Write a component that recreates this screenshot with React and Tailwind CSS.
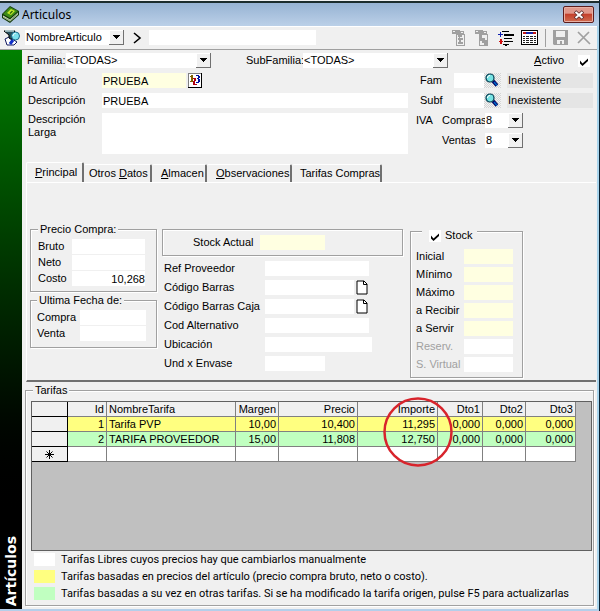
import React from "react";

const box = "rounded-none border-0 p-0 outline-none";
const group =
  "border border-[#a0a0a0] shadow-[1px_1px_0_#fff,inset_1px_1px_0_#fff]";

const TABS = [
  { key: "otros", width: "w-[68px] pl-[5px]", label: <>Otros <u>D</u>atos</> },
  { key: "almacen", width: "w-[55px] pl-[9px]", label: <><u>A</u>lmacen</> },
  { key: "observaciones", width: "w-[85px] pl-[9px]", label: <><u>O</u>bservaciones</> },
  { key: "compras", width: "w-[90px] pl-2", label: <>Tarifas Compras</> },
];

const TARIFAS = [
  { id: 1, nombre: "Tarifa PVP", margen: "10,00", precio: "10,400", importe: "11,295", color: "bg-[#ffff80]" },
  { id: 2, nombre: "TARIFA PROVEEDOR", margen: "15,00", precio: "11,808", importe: "12,750", color: "bg-[#c0ffc0]" },
];

const REFERENCIAS = [
  { id: "ref", label: "Ref Proveedor", width: "w-[104px]" },
  { id: "barras", label: "Código Barras", width: "w-[89px]", doc: true },
  { id: "caja", label: "Código Barras Caja", width: "w-[89px]", doc: true },
  { id: "alt", label: "Cod Alternativo", width: "w-[104px]" },
  { id: "ubi", label: "Ubicación", width: "w-[107px]" },
  { id: "und", label: "Und x Envase", width: "w-[60px]" },
];

const STOCK = [
  { label: "Inicial", bg: "bg-[#ffffe1]" },
  { label: "Mínimo", bg: "bg-[#ffffe1]" },
  { label: "Máximo", bg: "bg-[#ffffe1]" },
  { label: "a Recibir", bg: "bg-[#ffffe1]" },
  { label: "a Servir", bg: "bg-[#ffffe1]" },
  { label: "Reserv.", bg: "bg-white", off: true },
  { label: "S. Virtual", bg: "bg-white", off: true },
];

const LEYENDA = [
  { color: "bg-white", text: "Tarifas Libres cuyos precios hay que cambiarlos manualmente" },
  { color: "bg-[#ffff80]", text: "Tarifas basadas en precios del artículo (precio compra bruto, neto o costo)." },
  { color: "bg-[#c0ffc0]", text: "Tarifas basadas a su vez en otras tarifas. Si se ha modificado la tarifa origen, pulse F5 para actualizarlas" },
];

const Combo = ({ id, label, value, className }) => (
  <div className={`relative h-[15px] shrink-0 ${className}`}>
    <select id={id} aria-label={label} defaultValue={value} className={`${box} block h-full w-full appearance-none bg-white pl-px`}>
      <option>{value}</option>
    </select>
    <span className="pointer-events-none absolute inset-y-0 right-0 flex w-[15px] items-center justify-center border-r border-b border-[#707070] bg-[#f0f0f0] shadow-[inset_1px_1px_0_#fff]">
      <svg width="7" height="4" viewBox="0 0 7 4" shapeRendering="crispEdges"><path d="M0 0h7v1H6v1H5v1H4v1H3V3H2V2H1V1H0z" /></svg>
    </span>
  </div>
);

const Check = ({ id, label }) => (
  <span className="relative block size-3 shrink-0">
    <input id={id} aria-label={label} type="checkbox" defaultChecked className="block size-3 appearance-none bg-white" />
    <svg className="pointer-events-none absolute inset-0" width="12" height="12" viewBox="0 0 12 12">
      <path d="M2 5.500v3l2.500 2.500L10 6V3.500L4.500 8.500z" />
    </svg>
  </span>
);

const BookIcon = () => (
  <svg width="17" height="17" viewBox="0 0 17 17">
    <path d="M0 8 8 0l9 5v4L8 17l-8-5z" fill="#12380a" />
    <path d="M1 8 8 1l8 4-8 7z" fill="#3c8a18" />
    <path d="m1 9.500 7 4 8-7v2L8 15.500l-7-4z" fill="#e8f0d8" />
    <path d="m1 11 7 3.500 8-7" fill="none" stroke="#3a6a20" strokeWidth=".6" />
    <path d="M5 7 9 3l4 2-4 4z" fill="#c8ec28" />
    <path d="m8 7.500 2.500-2.500" stroke="#2c6a10" strokeWidth="1.500" />
  </svg>
);

const FilterIcon = () => (
  <svg width="18" height="17" viewBox="0 0 18 17">
    <path d="M2 10 6 8l8 5-3 3H4z" fill="#fff" stroke="#101860" />
    <path d="M1 2h11L9 6v5L6 9V6z" fill="#28505c" stroke="#000" />
    <path d="m2 2 9 0" stroke="#b8d8dc" strokeWidth="1.500" />
    <path d="m10 11-3 4" stroke="#1030c8" strokeWidth="3" />
    <circle cx="12.500" cy="7" r="4" fill="#7ce0ec" stroke="#1c6c8c" />
    <path d="M10 7c0-1.500 1-2.500 2.500-2.500" fill="none" stroke="#fff" />
  </svg>
);

const LensIcon = () => (
  <svg width="17" height="15" viewBox="0 0 17 15">
    <defs>
      <pattern id="dither" width="2" height="2" patternUnits="userSpaceOnUse">
        <path d="M0 0h1v1H0zM1 1h1v1H1z" fill="#d4d4d4" shapeRendering="crispEdges" />
      </pattern>
    </defs>
    <rect width="17" height="15" fill="#f4f4f4" />
    <rect width="17" height="15" fill="url(#dither)" />
    <path d="m9 8 4 4.500" stroke="#000060" strokeWidth="3.500" />
    <path d="m10 9 3 3.500" stroke="#0068c8" strokeWidth="1.500" />
    <circle cx="6" cy="5" r="4" fill="#78e4e4" stroke="#003c50" strokeWidth="1.200" />
    <path d="M3.500 5c0-1.500 1-2.500 2.500-2.500" fill="none" stroke="#fff" />
  </svg>
);

const NumberIcon = () => (
  <svg width="14" height="15" viewBox="0 0 14 15" shapeRendering="crispEdges">
    <path d="M0 0h14v15H0z" fill="#000" />
    <path d="M0 0h13v14H0z" fill="#808080" />
    <path d="M1 1h12v13H1z" fill="#fff" />
    <path d="M3 2h2v6H3zM2 3h1v1H2zM2 8h4v1H2z" fill="#806000" />
    <path d="M5 5h3v1H5zM6 6h2v2H6zM5 8h2v3H5zM5 11h4v1H5z" fill="#b00010" />
    <path d="M8 2h3v1H8zM10 3h2v2h-2zM9 5h2v1H9zM10 6h2v3h-2zM8 9h3v1H8z" fill="#0010a0" />
  </svg>
);

const DocIcon = () => (
  <svg width="12" height="15" viewBox="0 0 12 15">
    <path d="M1 1h7l3 3v10H1z" fill="#fff" stroke="#000" />
    <path d="M7.500 1v3.500H11" fill="none" stroke="#000" />
  </svg>
);

const SheetIcon = ({ alt }) => (
  <svg width="14" height="16" viewBox="0 0 14 16" shapeRendering="crispEdges">
    <path d="M0 0h8v1h4v3h1v12H4V4H0z" fill="#a0a0a0" />
    <path d="M1 1h2v1H1zM9 2h2v1H9zM5 5h7v10H5z" fill="#f0f0f0" />
    <path d={alt ? "M5 5h2v3h3v2h2v5H9v-2H7v-2H5z" : "M6 5h4v2H8v1h3v2H9v2h2v2H6v-2h1v-2H6V8h1V7H6z"} fill="#a0a0a0" />
  </svg>
);

const TreeIcon = () => (
  <svg width="16" height="16" viewBox="0 0 16 16" shapeRendering="crispEdges">
    <path d="M4 1h7v1H4zM6 4h10v2H6zM6 8h8v1H6zM6 11h9v1H6zM5 14h6v1H5zM7 15h2v1H7z" fill="#000" />
    <path d="M2 2h1v2h2v1H3v2H2V5H0V4h2z" fill="#1020b0" />
    <path d="M2 9h2v2h1v1H4v2H2v-2H1v-1h1z" fill="#d01010" />
  </svg>
);

const GridIcon = () => (
  <svg width="17" height="15" viewBox="0 0 17 15" shapeRendering="crispEdges">
    <path d="M0 0h17v15H0z" fill="#000" />
    <path d="M1 1h15v13H1z" fill="#fff" />
    <path d="M2 2h3v2H2zM12 2h3v2h-3z" fill="#c01818" />
    <path d="M5 2h7v2H5z" fill="#1828a8" />
    <path d="M2 6h13v1H2zM2 8h13v1H2zM2 10h13v1H2zM2 12h13v1H2z" fill="#202020" />
    <path d="M4 5h1v9H4zM8 5h1v9H8zM12 5h1v9h-1z" fill="#fff" />
  </svg>
);

const ToolButton = ({ label, children }) => (
  <button type="button" aria-label={label} className="flex shrink-0 items-center justify-center">{children}</button>
);

const Toolbar = () => (
  <div className="flex h-6 items-center border-b border-[#a0a0a0] pl-[3px] pr-[6px] shadow-[inset_0_1px_0_#fff]">
    <FilterIcon />
    <Combo id="campo" label="Campo" value="NombreArticulo" className="ml-1 w-[99px]" />
    <button type="button" aria-label="Buscar" className="ml-[9px]">
      <svg width="9" height="12" viewBox="0 0 9 12"><path d="m1 1 6 5-6 5" fill="none" stroke="#000" strokeWidth="1.600" /></svg>
    </button>
    <input aria-label="Filtro" className={`${box} ml-[7px] h-[15px] w-[167px] bg-white`} />
    <div className="ml-auto flex items-center">
      <ToolButton label="Exportar"><SheetIcon /></ToolButton>
      <span className="w-[9px]" />
      <ToolButton label="Copiar"><SheetIcon alt /></ToolButton>
      <span className="w-[9px]" />
      <ToolButton label="Ordenar"><TreeIcon /></ToolButton>
      <span className="w-[7px]" />
      <ToolButton label="Rejilla"><GridIcon /></ToolButton>
      <span className="mx-[7px] h-[18px] w-px bg-[#a0a0a0]" />
      <ToolButton label="Guardar">
        <svg width="15" height="15" viewBox="0 0 15 15"><path d="M0 0h15v15H1L0 14z" fill="#a0a0a0" /><path d="M3 1h9v6H3zM4 10h7v4H9v-3H7v3H4z" fill="#f0f0f0" /></svg>
      </ToolButton>
      <span className="w-[9px]" />
      <ToolButton label="Eliminar">
        <svg width="14" height="14" viewBox="0 0 14 14"><path d="m1 1 12 12M12 1 1 12" stroke="#a0a0a0" strokeWidth="1.700" /></svg>
      </ToolButton>
    </div>
  </div>
);

const Familia = ({ id, label }) => (
  <div className="flex items-center gap-[6px]">
    <label htmlFor={id} className="w-7">{label}</label>
    <div className="flex">
      <input id={id} className={`${box} h-[15px] w-[30px] bg-white`} />
      <button type="button" aria-label={`Buscar ${label}`}><LensIcon /></button>
    </div>
    <span className="h-[15px] flex-1 bg-[#e5e5e5] pl-px leading-[15px]">Inexistente</span>
  </div>
);

const Cabecera = () => (
  <div className="flex flex-col gap-[5px] pl-[5px] pr-1 pt-[3px]">
    <div className="flex h-[15px] items-center">
      <label htmlFor="familia" className="w-[39px]">Familia:</label>
      <Combo id="familia" value="<TODAS>" className="w-[145px]" />
      <label htmlFor="subfamilia" className="ml-[35px] w-[57px]">SubFamilia:</label>
      <Combo id="subfamilia" value="<TODAS>" className="w-[145px]" />
      <label htmlFor="activo" className="ml-auto mr-[14px]"><u>A</u>ctivo</label>
      <Check id="activo" />
      <span className="w-[3px]" />
    </div>
    <div className="flex gap-3">
      <div className="grid flex-1 grid-cols-[74px_minmax(0,1fr)] gap-y-[5px] pl-px">
        <label htmlFor="idart" className="pt-px">Id Artículo</label>
        <div className="flex gap-[2px]">
          <input id="idart" defaultValue="PRUEBA" className={`${box} h-[15px] w-[84px] bg-[#ffffe1] pl-px`} />
          <button type="button" aria-label="Siguiente número"><NumberIcon /></button>
        </div>
        <label htmlFor="desc" className="pt-px">Descripción</label>
        <input id="desc" defaultValue="PRUEBA" className={`${box} h-[15px] bg-white pl-px`} />
        <label htmlFor="larga">Descripción<br />Larga</label>
        <textarea id="larga" className={`${box} block h-[41px] resize-none bg-white`} />
      </div>
      <div className="flex w-[173px] flex-col gap-[5px]">
        <Familia id="fam" label="Fam" />
        <Familia id="subf" label="Subf" />
        <div className="-ml-1 grid grid-cols-[26px_43px_38px] items-center gap-y-[5px]">
          <span>IVA</span>
          <label htmlFor="ivac">Compras</label>
          <Combo id="ivac" value="8" className="w-[38px]" />
          <label htmlFor="ivav" className="col-start-2">Ventas</label>
          <Combo id="ivav" value="8" className="w-[38px]" />
        </div>
      </div>
    </div>
  </div>
);

const Tabs = () => (
  <div role="tablist" className="mt-[8px] flex items-end pl-1">
    <button role="tab" aria-selected="true" type="button" className="h-5 w-[58px] rounded-t-[2px] border-t border-l border-r-2 border-t-white border-l-white border-r-[#707070] pl-2 text-left">
      <u>P</u>rincipal
    </button>
    {TABS.map((t) => (
      <button key={t.key} role="tab" type="button" className={`${t.width} h-[18px] rounded-t-[2px] border-t border-r-2 border-t-white border-r-[#707070] text-left`}>
        {t.label}
      </button>
    ))}
  </div>
);

const Principal = () => (
  <div className="ml-1 mr-px flex items-start border-t border-l border-b-2 border-t-white border-l-white border-b-[#707070] pb-[2px] pl-[3px] pt-10">
    <div className="flex w-[127px] flex-col gap-[2px]">
      <fieldset className={`${group} px-[7px] pb-[5px] pt-[3px]`}>
        <legend className="bg-[#f0f0f0] px-[2px]">Precio Compra:</legend>
        <div className="grid grid-cols-[34px_73px] items-center gap-y-px">
          <label htmlFor="bruto">Bruto</label>
          <input id="bruto" className={`${box} h-[15px] bg-white text-right`} />
          <label htmlFor="neto">Neto</label>
          <input id="neto" className={`${box} h-[15px] bg-white text-right`} />
          <label htmlFor="costo">Costo</label>
          <input id="costo" defaultValue="10,268" className={`${box} h-[15px] bg-white text-right`} />
        </div>
      </fieldset>
      <fieldset className={`${group} px-[6px] pb-[6px] pt-[3px]`}>
        <legend className="bg-[#f0f0f0] px-[2px]">Ultima Fecha de:</legend>
        <div className="grid grid-cols-[43px_66px] items-center gap-y-px">
          <label htmlFor="fcompra">Compra</label>
          <input id="fcompra" className={`${box} h-[15px] bg-white`} />
          <label htmlFor="fventa">Venta</label>
          <input id="fventa" className={`${box} h-[15px] bg-white`} />
        </div>
      </fieldset>
    </div>

    <div className="ml-[5px] mt-[6px] w-[241px]">
      <div className={`${group} flex h-[27px] items-center pl-[30px]`}>
        <label htmlFor="actual" className="w-[67px]">Stock Actual</label>
        <input id="actual" className={`${box} h-[15px] w-[65px] bg-[#ffffe1]`} />
      </div>
      <div className="mt-[5px] flex flex-col gap-1 pl-[2px]">
        {REFERENCIAS.map((r) => (
          <div key={r.id} className="flex h-[15px] items-center">
            <label htmlFor={r.id} className="w-[101px] shrink-0">{r.label}</label>
            <input id={r.id} className={`${box} h-[15px] bg-white ${r.width}`} />
            {r.doc && <button type="button" aria-label="Abrir" className="ml-[2px]"><DocIcon /></button>}
          </div>
        ))}
      </div>
    </div>

    <fieldset className={`${group} ml-[7px] mt-[6px] w-[113px] pb-[5px] pl-[5px] pt-[15px]`}>
      <legend className="ml-[6px] h-[5px]">
        <span className="flex items-center gap-1 bg-[#f0f0f0] pl-[7px] pr-1">
          <Check id="stock" />
          <label htmlFor="stock">Stock</label>
        </span>
      </legend>
      <div className="grid grid-cols-[48px_49px] items-center gap-y-[3px]">
        {STOCK.map((s) => (
          <React.Fragment key={s.label}>
            <label htmlFor={s.label} className={s.off ? "text-[#a0a0a0]" : ""}>{s.label}</label>
            <input id={s.label} disabled={s.off} className={`${box} h-[15px] ${s.bg}`} />
          </React.Fragment>
        ))}
      </div>
    </fieldset>
  </div>
);

const cell = "h-[15px] border-r border-b border-[#808080] p-0 pr-[2px] text-right";
const rowHead = "h-[15px] border-r border-b border-black bg-[#f0f0f0] p-0";

const Tarifas = () => (
  <fieldset className={`${group} ml-[3px] mr-[3px] mt-[2px] flex-1 pb-[2px] pl-[5px] pr-px pt-1`}>
    <legend className="ml-[2px] bg-[#f0f0f0] px-[2px]">Tarifas</legend>
    <div className="relative h-[150px] border border-[#606060] bg-[#c0c0c0]">
      <table className="w-[544px] table-fixed border-separate border-spacing-0 leading-[14px]">
        <colgroup>
          <col className="w-9" /><col className="w-[39px]" /><col className="w-[129px]" /><col className="w-[43px]" />
          <col className="w-[79px]" /><col className="w-20" /><col className="w-[45px]" /><col className="w-[43px]" /><col className="w-[50px]" />
        </colgroup>
        <thead className="bg-[#f0f0f0]">
          <tr>
            <th className={rowHead} />
            <th className={`${cell} font-normal`}>Id</th>
            <th className="h-[15px] border-r border-b border-[#808080] p-0 pl-[2px] text-left font-normal">NombreTarifa</th>
            {["Margen", "Precio", "Importe", "Dto1", "Dto2", "Dto3"].map((h) => (
              <th key={h} className={`${cell} font-normal`}>{h}</th>
            ))}
          </tr>
        </thead>
        <tbody>
          {TARIFAS.map((t) => (
            <tr key={t.id} className={t.color}>
              <td className={rowHead} />
              <td className={cell}>{t.id}</td>
              <td className="h-[15px] border-r border-b border-[#808080] p-0 pl-[2px]">{t.nombre}</td>
              <td className={cell}>{t.margen}</td>
              <td className={cell}>{t.precio}</td>
              <td className={cell}>{t.importe}</td>
              <td className={cell}>0,000</td>
              <td className={cell}>0,000</td>
              <td className={cell}>0,000</td>
            </tr>
          ))}
          <tr className="bg-white">
            <td className={rowHead}>
              <svg className="mx-auto" width="9" height="9" viewBox="0 0 9 9"><path d="M4.500 0v9M0 4.500h9M1.500 1.500l6 6M7.500 1.500l-6 6" stroke="#000" /></svg>
            </td>
            {[0, 1, 2, 3, 4, 5, 6, 7].map((n) => <td key={n} className={cell} />)}
          </tr>
        </tbody>
      </table>
      <svg className="absolute -top-[5px] left-[351px]" width="70" height="70" viewBox="0 0 70 70">
        <circle cx="35" cy="35" r="33.500" fill="none" stroke="#d8242c" strokeWidth="2.500" />
      </svg>
    </div>
    <ul className="flex flex-col gap-1 pl-[3px] pt-[2px] font-[Roboto,sans-serif] text-[11px]">
      {LEYENDA.map((l) => (
        <li key={l.text} className="flex h-[13px] items-center gap-[6px]">
          <span className={`h-[13px] w-[21px] shrink-0 ${l.color}`} />
          {l.text}
        </li>
      ))}
    </ul>
  </fieldset>
);

const App = () => (
  <div className="flex min-h-screen flex-col border-r border-r-[#0a2030] bg-[#f0f0f0] font-['Liberation_Sans',sans-serif] text-[11px] leading-[13px] whitespace-nowrap text-black">
    <header className="mt-px flex h-[25px] items-center border-t-2 border-[#1c2c2c] bg-linear-to-b from-[#97b3d3] to-[#bbd0e8] pl-[2px] pr-[5px]">
      <BookIcon />
      <h1 className="ml-[3px] font-['Noto_Sans',sans-serif] text-[12px] leading-[16px]">Articulos</h1>
      <button type="button" aria-label="Cerrar" className="ml-auto flex h-[17px] w-[31px] items-center justify-center rounded-[2px] border border-[#5c1c1c] bg-linear-to-b from-[#e0988c] from-40% via-[#c4402c] via-50% to-[#d06c50] shadow-[inset_0_0_0_1px_#e8b0a4]">
        <svg width="12" height="10" viewBox="0 0 12 10">
          <path d="m2 1.500 8 7M10 1.500l-8 7" stroke="#5a2a2a" strokeWidth="3.500" />
          <path d="m2.500 2 7 6M9.500 2l-7 6" stroke="#fff" strokeWidth="2" />
        </svg>
      </button>
    </header>
    <div className="flex flex-1 flex-col border-r-2 border-b-2 border-r-[#a8d4ec] border-b-[#b4cfea]">
      <Toolbar />
      <div className="flex flex-1">
        <aside className="flex w-[22px] shrink-0 items-end justify-center bg-linear-to-b from-[#008000] to-black to-85% pb-[3px]">
          <span className="rotate-180 font-['DejaVu_Sans',sans-serif] text-[14px] leading-[18px] font-bold text-white [writing-mode:vertical-rl]">Artículos</span>
        </aside>
        <main className="flex min-w-0 flex-1 flex-col pb-[3px]">
          <Cabecera />
          <Tabs />
          <Principal />
          <Tarifas />
        </main>
      </div>
    </div>
  </div>
);

export default App;
